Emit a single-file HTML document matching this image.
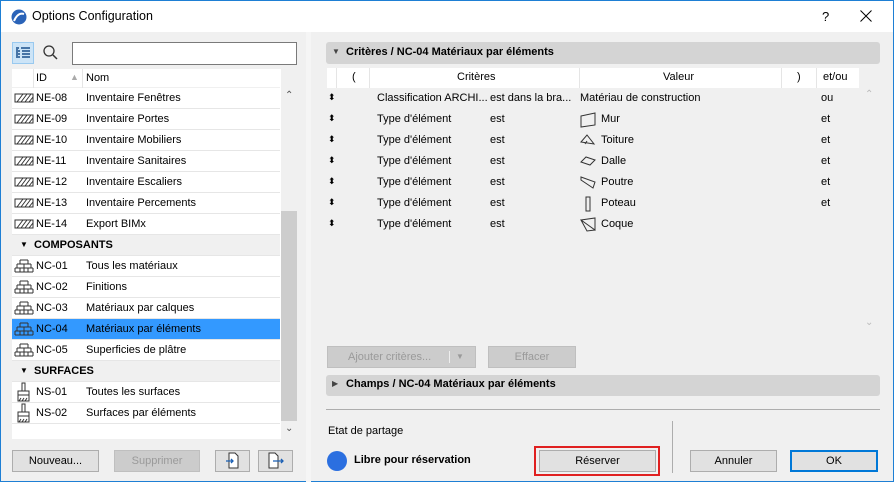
<!DOCTYPE html>
<html><head><meta charset="utf-8"><style>
*{box-sizing:border-box;margin:0;padding:0}
body{width:894px;height:482px;overflow:hidden;font-family:"Liberation Sans",sans-serif;font-size:11px;color:#000;background:#fff}
.win{position:absolute;left:0;top:0;width:894px;height:482px;border:1px solid #1e7fd4;background:#f0f0f0}
.title{position:absolute;left:0;top:0;width:892px;height:31px;background:#fff}
.a{position:absolute;white-space:nowrap}
.list{position:absolute;left:11px;top:68px;width:285px;height:370px;background:#fff}
.row{position:absolute;left:0;width:268px;height:21px;border-bottom:1px solid #e6e6e6;line-height:20px}
.row .id{position:absolute;left:24px}
.row .nm{position:absolute;left:74px}
.grp{background:#f0f0f0;font-weight:bold}
.btn{position:absolute;height:22px;border:1px solid #adadad;background:#e1e1e1;text-align:center;line-height:20px}
.dis{color:#9a9a9a;background:#cccccc;border-color:#bfbfbf}
.trow{position:absolute;left:326px;width:530px;height:21px;line-height:21px}
.trow span{position:absolute}
</style></head><body><div class="win">
<div class="title">
 <svg class="a" style="left:10px;top:8px" width="16" height="16" viewBox="0 0 16 16"><circle cx="8" cy="8" r="7.5" fill="#2a63b8"/><path d="M3 12 Q7 3 13 5" stroke="#fff" stroke-width="2" fill="none"/></svg>
 <div class="a" style="left:31px;top:8px;font-size:12.5px">Options Configuration</div>
 <div class="a" style="left:821px;top:8px;font-size:13px">?</div>
 <svg class="a" style="left:859px;top:9px" width="12" height="12"><path d="M0.5 0.5l11 11M11.5 0.5l-11 11" stroke="#000" stroke-width="1"/></svg>
</div>
<div class="a" style="left:11px;top:41px;width:22px;height:22px;background:#cce4f7;border:1px solid #99c9ef"></div>
<svg class="a" style="left:14px;top:45px" width="16" height="14"><path d="M1 2h3M6 2h9M3 5h2M7 5h8M3 8h2M7 8h8M3 11h2M7 11h8M2 3v9" stroke="#1a4f8b" stroke-width="1.5"/></svg>
<svg class="a" style="left:41px;top:43px" width="17" height="17"><circle cx="7" cy="7" r="5" stroke="#333" stroke-width="1.3" fill="none"/><path d="M11 11l4 4" stroke="#333" stroke-width="1.5"/></svg>
<div class="a" style="left:71px;top:41px;width:225px;height:23px;background:#fff;border:1px solid #7a7a7a"></div>
<div class="list">
 <div class="a" style="left:0;top:0;width:268px;height:19px;background:#fff;border-bottom:1px solid #f0f0f0">
  <span class="a" style="left:24px;top:3px">ID</span><span class="a" style="left:58px;top:3px;color:#aaa;font-size:9px">▲</span><span class="a" style="left:74px;top:3px">Nom</span>
  <div class="a" style="left:21px;top:0;width:1px;height:19px;background:#e5e5e5"></div><div class="a" style="left:70px;top:0;width:1px;height:19px;background:#e5e5e5"></div>
 </div>
 <div class="a" style="left:269px;top:0;width:16px;height:370px;background:#f0f0f0"></div>
 <div class="a" style="left:269px;top:142px;width:16px;height:210px;background:#cdcdcd"></div>
 <div class="a" style="left:273px;top:21px;font-size:10px;color:#555">⌃</div>
 <div class="a" style="left:273px;top:354px;font-size:10px;color:#555">⌄</div>
</div>
<div id="rows"></div>
<div class="btn" style="left:11px;top:449px;width:87px">Nouveau...</div>
<div class="btn dis" style="left:113px;top:449px;width:86px">Supprimer</div>
<div class="btn" style="left:214px;top:449px;width:35px"><svg width="16" height="18" style="margin-top:1px"><path d="M4 1h6l3 3v12H4z" fill="#fff" stroke="#333"/><path d="M1 9h7M6 7l2 2-2 2" stroke="#1a5fb4" stroke-width="1.3" fill="none"/></svg></div>
<div class="btn" style="left:257px;top:449px;width:35px"><svg width="18" height="18" style="margin-top:1px"><path d="M2 1h6l3 3v12H2z" fill="#fff" stroke="#333"/><path d="M6 9h10M14 7l2 2-2 2" stroke="#1a5fb4" stroke-width="1.3" fill="none"/></svg></div>
<div class="a" style="left:305px;top:31px;width:5px;height:450px;background:#f5f5f5"></div>
<div class="a" style="left:325px;top:41px;width:554px;height:22px;background:#d4d4d4;border-radius:3px"></div>
<div class="a" style="left:331px;top:46px;font-size:8px;color:#444">▼</div>
<div class="a" style="left:345px;top:45px;font-weight:bold">Critères / NC-04 Matériaux par éléments</div>
<div class="a" style="left:326px;top:67px;width:532px;height:20px;background:#fff"></div>
<div class="a" style="left:335px;top:67px;width:1px;height:20px;background:#e5e5e5"></div>
<div class="a" style="left:368px;top:67px;width:1px;height:20px;background:#e5e5e5"></div>
<div class="a" style="left:578px;top:67px;width:1px;height:20px;background:#e5e5e5"></div>
<div class="a" style="left:780px;top:67px;width:1px;height:20px;background:#e5e5e5"></div>
<div class="a" style="left:815px;top:67px;width:1px;height:20px;background:#e5e5e5"></div>
<div class="a" style="left:351px;top:70px">(</div>
<div class="a" style="left:456px;top:70px">Critères</div>
<div class="a" style="left:662px;top:70px">Valeur</div>
<div class="a" style="left:796px;top:70px">)</div>
<div class="a" style="left:822px;top:70px">et/ou</div>
<div class="a" style="left:860px;top:87px;width:18px;height:245px;background:#f0f0f0"></div>
<div class="a" style="left:864px;top:88px;font-size:10px;color:#bbb">⌃</div>
<div class="a" style="left:864px;top:316px;font-size:10px;color:#bbb">⌄</div>
<div id="trows"></div>
<div class="btn dis" style="left:326px;top:345px;width:149px;text-align:left;padding-left:20px">Ajouter critères...<span class="a" style="left:128px;top:0;font-size:8px">▼</span><span class="a" style="left:121px;top:4px;width:1px;height:12px;background:#eee"></span></div>
<div class="btn dis" style="left:487px;top:345px;width:88px">Effacer</div>
<div class="a" style="left:325px;top:374px;width:554px;height:21px;background:#d4d4d4;border-radius:3px"></div>
<div class="a" style="left:331px;top:378px;font-size:8px;color:#444">▶</div>
<div class="a" style="left:345px;top:377px;font-weight:bold">Champs / NC-04 Matériaux par éléments</div>
<div class="a" style="left:325px;top:408px;width:554px;height:1px;background:#adadad"></div>
<div class="a" style="left:671px;top:420px;width:1px;height:52px;background:#adadad"></div>
<div class="a" style="left:327px;top:424px">Etat de partage</div>
<div class="a" style="left:326px;top:450px;width:20px;height:20px;border-radius:50%;background:#2b6fe0"></div>
<div class="a" style="left:353px;top:453px;font-weight:bold">Libre pour réservation</div>
<div class="a" style="left:533px;top:445px;width:126px;height:30px;border:2px solid #e02020"></div>
<div class="btn" style="left:538px;top:449px;width:117px">Réserver</div>
<div class="btn" style="left:689px;top:449px;width:87px">Annuler</div>
<div class="btn" style="left:789px;top:449px;width:88px;border:2px solid #0078d7;line-height:18px">OK</div>
</div>
<script>
var L=[["h","NE-08","Inventaire Fenêtres"],["h","NE-09","Inventaire Portes"],["h","NE-10","Inventaire Mobiliers"],["h","NE-11","Inventaire Sanitaires"],["h","NE-12","Inventaire Escaliers"],["h","NE-13","Inventaire Percements"],["h","NE-14","Export BIMx"],["g","COMPOSANTS"],["b","NC-01","Tous les matériaux"],["b","NC-02","Finitions"],["b","NC-03","Matériaux par calques"],["s","NC-04","Matériaux par éléments"],["b","NC-05","Superficies de plâtre"],["g","SURFACES"],["p","NS-01","Toutes les surfaces"],["p","NS-02","Surfaces par éléments"]];
var ic={h:'<svg width="20" height="10"><rect x="1" y="1" width="18" height="8" fill="#fff" stroke="#333"/><path d="M3 9l6-8M7 9l6-8M11 9l6-8M15 9l4-5" stroke="#333"/></svg>',
b:'<svg width="20" height="14"><path d="M1 13h18M1 9h18M3 5h14M6 1h8M1 9v4M19 9v4M3 5v4M17 5v4M6 1v4M14 1v4M6 9v4M10 9v4M14 9v4M10 5v4" stroke="#333" fill="none"/></svg>',
p:'<svg width="20" height="20"><path d="M8 1h3v8H8zM4 9h11v4H4zM4 13v6h11v-6M5 19l2-3M8 19l2-3M11 19l2-3" stroke="#333" fill="#fff"/></svg>'};
ic.s=ic.b;var h="";
L.forEach(function(r,i){var t=87+i*21;
if(r[0]=="g")h+='<div class="row grp a" style="left:11px;top:'+t+'px"><span class="a" style="left:8px;font-size:8px">▼</span><span class="a" style="left:22px">'+r[1]+'</span></div>';
else h+='<div class="row a" style="left:11px;top:'+t+'px;'+(r[0]=="s"?'background:#3399ff;':'')+'"><span class="a" style="left:2px;top:'+(r[0]=="h"?5:r[0]=="p"?0:3)+'px;line-height:0">'+ic[r[0]]+'</span><span class="id">'+r[1]+'</span><span class="nm">'+r[2]+'</span></div>';});
document.getElementById("rows").innerHTML=h;
var T=[["Classification ARCHI...","est dans la bra...","Matériau de construction","ou",""],["Type d'élément","est","Mur","et",'<path d="M1 4l14-3v12L1 15z"/>'],["Type d'élément","est","Toiture","et",'<path d="M1 9l6-7 7 9zM5 11l2-3"/>'],["Type d'élément","est","Dalle","et",'<path d="M1 8l5-5 9 3-5 5z"/>'],["Type d'élément","est","Poutre","et",'<path d="M1 2l14 5-2 6L1 5z"/>'],["Type d'élément","est","Poteau","et",'<path d="M6 1h4v14H6z"/>'],["Type d'élément","est","Coque","",'<path d="M1 3l14 10V1zM1 3l6 11 8-1"/>']];
h="";T.forEach(function(r,i){var t=87+i*21;
h+='<div class="trow" style="top:'+t+'px"><span style="left:1px;font-size:9px;top:-1px">⬍</span><span style="left:50px">'+r[0]+'</span><span style="left:163px">'+r[1]+'</span>'+(r[4]?'<span style="left:253px;top:3px;line-height:0"><svg width="17" height="16" fill="none" stroke="#333">'+r[4]+'</svg></span><span style="left:274px">'+r[2]+'</span>':'<span style="left:253px">'+r[2]+'</span>')+'<span style="left:494px">'+r[3]+'</span></div>';});
document.getElementById("trows").innerHTML=h;
</script>
</body></html>
